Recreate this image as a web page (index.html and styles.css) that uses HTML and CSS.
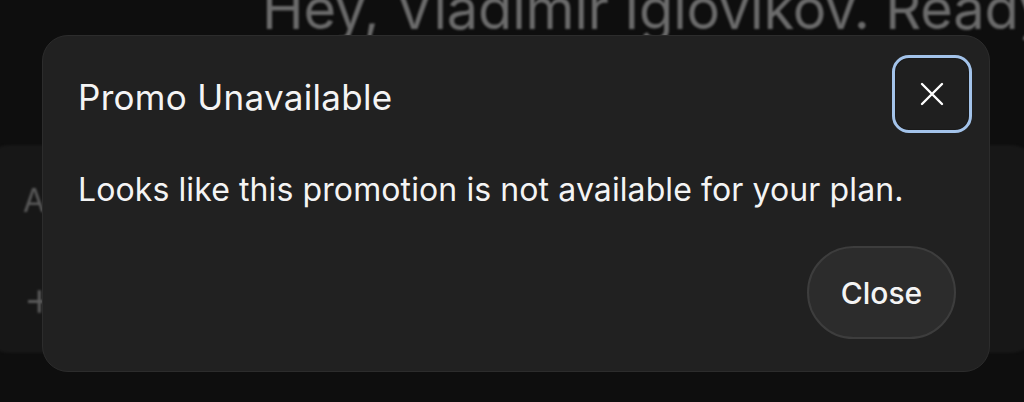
FILE: index.html
```html
<!DOCTYPE html>
<html lang="en">
<head>
    <meta charset="UTF-8">
    <meta name="viewport" content="width=device-width, initial-scale=1.0">
    <title>Promo Unavailable</title>
    <link rel="stylesheet" href="styles.css">
</head>
<body>
    <div class="page">
        <h1 class="greeting">Hey, Vladimir Iglovikov. Ready</h1>
        <div class="composer">
            <span class="composer-hint">A</span>
            <span class="composer-add">+</span>
        </div>
    </div>
    <div class="overlay">
        <div class="dialog" role="dialog">
            <div class="dialog-head">
                <h2 class="dialog-title">Promo Unavailable</h2>
                <button class="icon-btn" aria-label="Close">
                    <svg width="24" height="24" viewBox="0 0 24 24"><path d="M2 2L22 22M22 2L2 22" stroke="#fff" stroke-width="2.4" stroke-linecap="round"/></svg>
                </button>
            </div>
            <p class="dialog-text">Looks like this promotion is not available for your plan.</p>
            <div class="dialog-foot">
                <button class="close-btn">Close</button>
            </div>
        </div>
    </div>
</body>
</html>
```

FILE: styles.css
```css
*{
    margin: 0;
    padding: 0;
    box-sizing: border-box;
}
html,body{
    width: 1024px;
    height: 402px;
    overflow: hidden;
}
body{
    background: #0e0e0e;
    font-family: Inter, "Noto Sans", sans-serif;
    position: relative;
}
.page{
    filter: blur(1.2px);
}
.greeting{
    font-size: 56px;
    font-weight: 400;
    color: #6b6b6b;
    white-space: nowrap;
    margin: -25px 0 0 262px;
    line-height: 68px;
    letter-spacing: -0.2px;
}
.composer{
    margin: 102px 0 0 -20px;
    width: 1060px;
    height: 208px;
    background: #171717;
    border-radius: 30px;
    display: flex;
    flex-direction: column;
    padding: 36px 0 0 43px;
    color: #5a5a5a;
}
.composer-hint{
    font-size: 32px;
    height: 92px;
}
.composer-add{
    font-size: 50px;
    font-weight: 300;
    line-height: 1;
}
.overlay{
    position: absolute;
    top: 0;
    left: 0;
    right: 0;
    bottom: 0;
    padding: 35px 34px 30px 42px;
}
.dialog{
    height: 337px;
    background: #212121;
    border: 1px solid #2c2c2c;
    border-radius: 26px;
    display: flex;
    flex-direction: column;
    color: #f4f4f4;
}
.dialog-head{
    display: flex;
    align-items: center;
    justify-content: space-between;
    padding: 19px 17px 0 35px;
}
.dialog-title{
    font-size: 35px;
    font-weight: 400;
    letter-spacing: 0.3px;
    line-height: 40px;
    margin-top: 5px;
}
.icon-btn{
    width: 80px;
    height: 78px;
    border-radius: 17px;
    border: 3px solid #a3c3ea;
    box-shadow: inset 0 0 0 1px #1a1a1a;
    background: #1f1f1f;
    display: flex;
    align-items: center;
    justify-content: center;
}
.dialog-text{
    font-size: 32px;
    letter-spacing: 0.1px;
    line-height: 40px;
    padding-left: 35px;
    margin-top: 37px;
}
.dialog-foot{
    margin-top: auto;
    display: flex;
    justify-content: flex-end;
    padding: 0 33px 32px 0;
}
.close-btn{
    width: 149px;
    height: 93px;
    border-radius: 47px;
    background: #2c2c2c;
    border: 2px solid #3d3d3d;
    color: #f4f4f4;
    font-family: Inter, "Noto Sans", sans-serif;
    font-size: 30px;
    font-weight: 500;
}
```
